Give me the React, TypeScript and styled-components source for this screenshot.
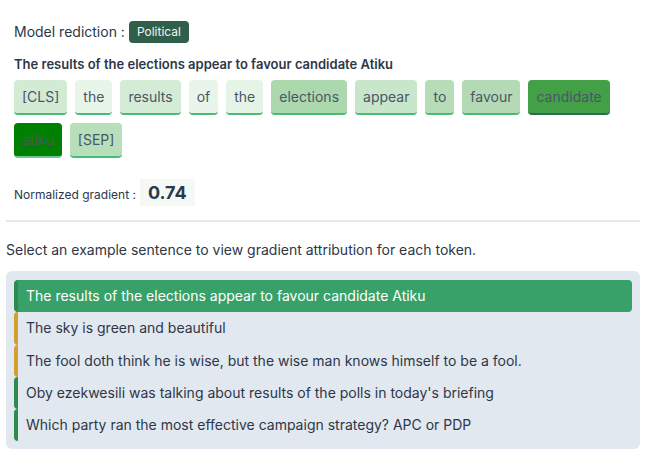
import React from "react";
import styled, { createGlobalStyle } from "styled-components";

const Global = createGlobalStyle`
  html, body { margin: 0; padding: 0; background: #ffffff; }
  body { font-family: Inter, "Noto Sans", sans-serif; color: #2d3748; }
  * { box-sizing: border-box; }
`;

const Page = styled.div`
  width: 645px;
  padding: 21px 5px 0 6px;
`;

const Top = styled.section`
  padding: 0 8px;
`;

const PredRow = styled.div`
  display: flex;
  align-items: center;
  gap: 4px;
  font-size: 14px;
  line-height: 22px;
  color: #2d3748;
`;

const Badge = styled.span`
  display: inline-block;
  background: #2f5f4b;
  color: #f0f5f2;
  font-size: 12px;
  line-height: 22px;
  padding: 0 8px;
  border-radius: 4px;
`;

const Title = styled.div`
  margin-top: 11px;
  font-size: 13px;
  font-weight: 600;
  line-height: 20px;
  color: #2d3748;
`;

const Tokens = styled.div`
  margin-top: 6px;
  display: flex;
  flex-wrap: wrap;
  gap: 8px;
`;

const Token = styled.span<{ $bg: string; $edge: string }>`
  display: inline-block;
  background: ${(p) => p.$bg};
  border-bottom: 2px solid ${(p) => p.$edge};
  border-radius: 4px;
  padding: 6px 8px;
  font-size: 14px;
  line-height: 21px;
  color: #4a5568;
`;

const GradRow = styled.div`
  margin-top: 21px;
  display: flex;
  align-items: center;
  gap: 4px;
  font-size: 12px;
  color: #2d3748;
`;

const GradLabel = styled.span`
  padding-top: 3px;
`;

const GradValue = styled.span`
  background: #f5f9f5;
  padding: 0 8px;
  font-size: 18px;
  font-weight: 700;
  line-height: 27px;
  color: #2d3748;
`;

const Divider = styled.hr`
  margin: 14px 0 0;
  border: none;
  height: 2px;
  background: #e2e8f0;
`;

const Prompt = styled.p`
  margin: 18px 0 0;
  font-size: 14px;
  line-height: 20px;
  color: #2d3748;
`;

const Panel = styled.div`
  margin-top: 11px;
  background: #e2e8f0;
  border-radius: 6px;
  padding: 9px 8px 8px;
  display: flex;
  flex-direction: column;
`;

const Item = styled.div<{ $active?: boolean; $edge: string }>`
  height: 32.3px;
  display: flex;
  align-items: center;
  padding-left: 8px;
  border-left: 4px solid ${(p) => p.$edge};
  border-radius: 4px;
  background: ${(p) => (p.$active ? "#38a169" : "transparent")};
  color: ${(p) => (p.$active ? "#ffffff" : "#2d3748")};
  font-size: 14px;
  line-height: 20px;
`;

const tokens: { t: string; bg: string; edge: string }[] = [
  { t: "[CLS]", bg: "#d3ebd5", edge: "#48bb78" },
  { t: "the", bg: "#e8f5e9", edge: "#48bb78" },
  { t: "results", bg: "#d4ecd6", edge: "#48bb78" },
  { t: "of", bg: "#e9f5ea", edge: "#48bb78" },
  { t: "the", bg: "#e6f3e7", edge: "#48bb78" },
  { t: "elections", bg: "#acd8ae", edge: "#48bb78" },
  { t: "appear", bg: "#c8e6c9", edge: "#48bb78" },
  { t: "to", bg: "#b6dcb8", edge: "#48bb78" },
  { t: "favour", bg: "#b3dab5", edge: "#48bb78" },
  { t: "candidate", bg: "#43a047", edge: "#2f6b4f" },
  { t: "atiku", bg: "#008000", edge: "#68c98a" },
  { t: "[SEP]", bg: "#b7dfba", edge: "#48bb78" },
];

const sentences: { s: string; edge: string }[] = [
  { s: "The results of the elections appear to favour candidate Atiku", edge: "#2f8a4f" },
  { s: "The sky is green and beautiful", edge: "#d69e2e" },
  { s: "The fool doth think he is wise, but the wise man knows himself to be a fool.", edge: "#d69e2e" },
  { s: "Oby ezekwesili was talking about results of the polls in today's briefing", edge: "#2f8a4f" },
  { s: "Which party ran the most effective campaign strategy? APC or PDP", edge: "#2f8a4f" },
];

export default function App() {
  return (
    <>
      <Global />
      <Page>
        <Top>
          <PredRow>
            <span>Model rediction :</span>
            <Badge>Political</Badge>
          </PredRow>
          <Title>The results of the elections appear to favour candidate Atiku</Title>
          <Tokens>
            {tokens.map((k, i) => (
              <Token key={i} $bg={k.bg} $edge={k.edge}>
                {k.t}
              </Token>
            ))}
          </Tokens>
          <GradRow>
            <GradLabel>Normalized gradient :</GradLabel>
            <GradValue>0.74</GradValue>
          </GradRow>
        </Top>
        <Divider />
        <Prompt>Select an example sentence to view gradient attribution for each token.</Prompt>
        <Panel>
          {sentences.map((x, i) => (
            <Item key={i} $active={i === 0} $edge={x.edge}>
              {x.s}
            </Item>
          ))}
        </Panel>
      </Page>
    </>
  );
}
